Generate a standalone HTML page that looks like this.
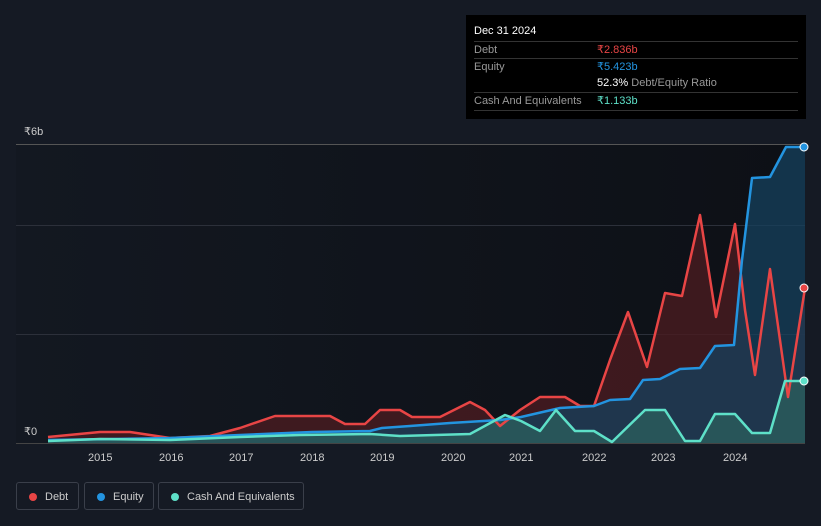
<!DOCTYPE html><html><head><style>
body{margin:0;width:821px;height:526px;background:#151a24;font-family:"Liberation Sans",sans-serif;overflow:hidden;position:relative}
.tt{position:absolute;left:466px;top:15px;width:340px;height:104px;background:#000;font-size:11px;color:#999}
.row{position:absolute;left:8px;width:324px;border-top:1px solid #333;height:17px;line-height:17px}
.leg{position:absolute;top:482px;height:28px;border:1px solid #3a3f4a;border-radius:3px;color:#ccc;font-size:11px;line-height:28px;box-sizing:border-box;padding-left:28px}
.leg i{position:absolute;left:12px;top:10px;width:8px;height:8px;border-radius:50%}
.ax{position:absolute;top:452px;font-size:11px;color:#ccc}
</style></head><body>
<svg width="821" height="526" style="position:absolute;left:0;top:0">
<defs><linearGradient id="bg" x1="0" x2="1" y1="0" y2="0"><stop offset="0" stop-color="#131821"/><stop offset="1" stop-color="#0d1016"/></linearGradient></defs>
<rect x="16" y="144" width="789" height="299" fill="url(#bg)"/>
<g stroke="#2c303a" stroke-width="1"><line x1="16" y1="144.5" x2="805" y2="144.5" stroke="#555"/><line x1="16" y1="225.5" x2="805" y2="225.5"/><line x1="16" y1="334.5" x2="805" y2="334.5"/><line x1="16" y1="443.5" x2="805" y2="443.5" stroke="#444"/></g>
<polygon fill="#4a1c20" opacity="0.8" points="48,437 100,432 130,432 170,438 210,436 240,428 275,416 330,416 345,424 365,424 380,410 400,410 412,417 440,417 470,402 485,410 500,426 520,410 540,397 565,397 580,406 594,406 610,360 628,312 647,367 665,293 682,296 700,215 716,317 735,224 745,310 755,375 770,269 788,397 805,288 805,443 48,443"/>
<polygon fill="#15405e" opacity="0.75" points="48,440 170,438 240,435 312,432 370,431 382,428 410,426 450,423 500,420 521,417 560,408 594,406 610,400 630,399 643,380 660,379 680,369 700,368 715,346 734,345 742,260 752,178 770,177 786,147 805,147 805,443 48,443"/>
<polygon fill="#2f6b63" opacity="0.6" points="48,441 100,439 170,440 240,437 300,435 370,434 400,436 470,434 505,415 521,421 540,431 556,410 575,431 594,431 612,442 645,410 665,410 685,441 700,441 715,414 735,414 752,433 770,433 785,381 805,381 805,443 48,443"/>
<g fill="none" stroke-width="2.5" stroke-linejoin="round">
<polyline stroke="#e84545" points="48,437 100,432 130,432 170,438 210,436 240,428 275,416 330,416 345,424 365,424 380,410 400,410 412,417 440,417 470,402 485,410 500,426 520,410 540,397 565,397 580,406 594,406 610,360 628,312 647,367 665,293 682,296 700,215 716,317 735,224 745,310 755,375 770,269 788,397 805,288"/>
<polyline stroke="#2394e0" points="48,440 170,438 240,435 312,432 370,431 382,428 410,426 450,423 500,420 521,417 560,408 594,406 610,400 630,399 643,380 660,379 680,369 700,368 715,346 734,345 742,260 752,178 770,177 786,147 805,147"/>
<polyline stroke="#5ee0c8" points="48,441 100,439 170,440 240,437 300,435 370,434 400,436 470,434 505,415 521,421 540,431 556,410 575,431 594,431 612,442 645,410 665,410 685,441 700,441 715,414 735,414 752,433 770,433 785,381 805,381"/>
</g>
<circle cx="804" cy="147" r="4" fill="#2394e0" stroke="#fff"/><circle cx="804" cy="288" r="4" fill="#e84545" stroke="#fff"/><circle cx="804" cy="381" r="4" fill="#5ee0c8" stroke="#fff"/>
</svg>
<div style="position:absolute;left:24px;top:125px;font-size:11px;color:#ccc">₹6b</div>
<div style="position:absolute;left:24px;top:425px;font-size:11px;color:#ccc">₹0</div>
<div class="ax" style="left:88px">2015</div><div class="ax" style="left:159px">2016</div><div class="ax" style="left:229px">2017</div><div class="ax" style="left:300px">2018</div><div class="ax" style="left:370px">2019</div><div class="ax" style="left:441px">2020</div><div class="ax" style="left:509px">2021</div><div class="ax" style="left:582px">2022</div><div class="ax" style="left:651px">2023</div><div class="ax" style="left:723px">2024</div>
<div class="tt">
<div style="position:absolute;left:8px;top:10px;color:#fff">Dec 31 2024</div>
<div class="row" style="top:26px">Debt<span style="position:absolute;left:123px;color:#e84545">₹2.836b</span></div>
<div class="row" style="top:43px">Equity<span style="position:absolute;left:123px;color:#2394e0">₹5.423b</span></div>
<div class="row" style="top:60px;border:0"><span style="position:absolute;left:123px"><b style="color:#fff;font-weight:normal">52.3%</b> Debt/Equity Ratio</span></div>
<div class="row" style="top:77px">Cash And Equivalents<span style="position:absolute;left:123px;color:#5ee0c8">₹1.133b</span></div>
<div class="row" style="top:95px"></div>
</div>
<div class="leg" style="left:16px;width:63px"><i style="background:#e84545"></i>Debt</div>
<div class="leg" style="left:84px;width:70px"><i style="background:#2394e0"></i>Equity</div>
<div class="leg" style="left:158px;width:146px"><i style="background:#5ee0c8"></i>Cash And Equivalents</div>
</body></html>
